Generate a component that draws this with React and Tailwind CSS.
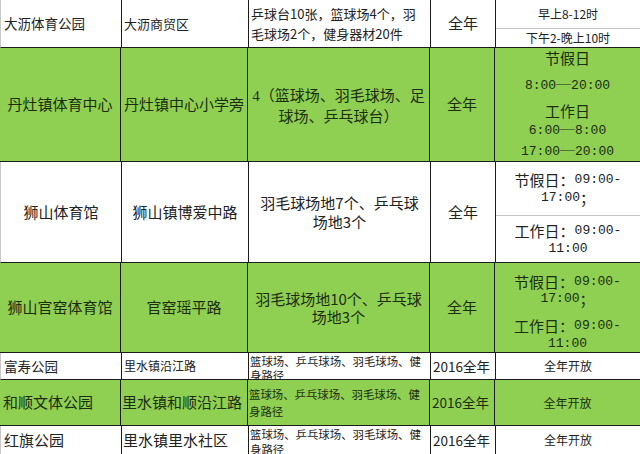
import React from "react"

const sans = "font-['Noto_Sans_CJK_SC',sans-serif]"
const mono = "font-['Liberation_Mono','Noto_Sans_CJK_SC',monospace] text-[13px] leading-none"

function Row({ h, green, children }) {
  return (
    <div
      className={`grid grid-cols-[121px_127px_182px_65px_1fr] border-b border-[#1c1c1c] ${h} ${
        green ? "bg-[#8fcf52] text-[#1b2e12]" : "bg-white text-[#222] border-l border-l-[#c8c8c8]"
      }`}
    >
      {children}
    </div>
  )
}

function Cell({ className = "", children, last }) {
  return (
    <div className={`flex items-center overflow-hidden ${last ? "" : "border-r border-[#1c1c1c]"} ${className}`}>
      {children}
    </div>
  )
}

function Line({ h = "h-[18px]", className = "", children }) {
  return <div className={`${h} flex items-center whitespace-nowrap ${className}`}>{children}</div>
}

function Time({ label, a, b, semi }) {
  return (
    <>
      <Line>
        <span className="text-[15px] leading-none">{label}</span>
        <span className={mono}>{a}</span>
      </Line>
      <Line>
        <span className={mono}>{b}</span>
        {semi && <span className="text-[15px] leading-none">；</span>}
      </Line>
    </>
  )
}

function Dash({ from, to, className = "" }) {
  return (
    <Line h="h-[20px]" className={className}>
      <span className={mono}>{from}</span>
      <span className="font-['Liberation_Serif',serif] text-[15px] leading-[15px] relative -top-[2px]">—</span>
      <span className={mono}>{to}</span>
    </Line>
  )
}

export default function App() {
  return (
    <div className={`w-[640px] h-[454px] overflow-hidden bg-white ${sans}`}>
      {/* 大沥 */}
      <Row h="h-[48px]">
        <Cell className="px-[3px] text-[13.5px]">大沥体育公园</Cell>
        <Cell className="px-[2px] text-[13px]">大沥商贸区</Cell>
        <Cell className="px-[2px] text-[13px] leading-[20px]">
          <div>
            乒球台10张，篮球场4个，羽
            <br />
            毛球场2个，健身器材20件
          </div>
        </Cell>
        <Cell className="justify-center text-[15px]">全年</Cell>
        <Cell last className="flex-col items-stretch text-[12px]">
          <div className="h-[29px] flex items-center justify-center border-b border-[#c4c4c4]">早上8-12时</div>
          <div className="flex-1 flex items-center justify-center">下午2-晚上10时</div>
        </Cell>
      </Row>

      {/* 丹灶 */}
      <Row h="h-[114px]" green>
        <Cell className="justify-center text-[15px]">丹灶镇体育中心</Cell>
        <Cell className="justify-center text-[15px] whitespace-nowrap">丹灶镇中心小学旁</Cell>
        <Cell className="justify-center text-center text-[15px] leading-[19px]">
          <div>
            <span className="font-['Liberation_Serif',serif]">4</span>（篮球场、羽毛球场、足
            <br />
            球场、乒乓球台）
          </div>
        </Cell>
        <Cell className="justify-center text-[15px]">全年</Cell>
        <Cell last className="flex-col items-center justify-start">
          <Line h="h-[20px]" className="text-[15px]">节假日</Line>
          <Dash from="8:00" to="20:00" className="mt-[8px]" />
          <Line h="h-[20px]" className="mt-[6px] text-[15px]">工作日</Line>
          <Dash from="6:00" to="8:00" className="h-[19px]" />
          <Dash from="17:00" to="20:00" className="mt-[1px]" />
        </Cell>
      </Row>

      {/* 狮山体育馆 */}
      <Row h="h-[101px]">
        <Cell className="justify-center text-[15px]">狮山体育馆</Cell>
        <Cell className="justify-center text-[15px]">狮山镇博爱中路</Cell>
        <Cell className="justify-center text-center text-[15px] leading-[19px]">
          <div>
            羽毛球场地7个、乒乓球
            <br />
            场地3个
          </div>
        </Cell>
        <Cell className="justify-center text-[15px]">全年</Cell>
        <Cell last className="flex-col items-stretch">
          <div className="h-[54px] flex flex-col items-center justify-center border-b border-[#c4c4c4]">
            <Time label="节假日：" a="09:00-" b="17:00" semi />
          </div>
          <div className="flex-1 flex flex-col items-center justify-center">
            <Time label="工作日：" a="09:00-" b="11:00" />
          </div>
        </Cell>
      </Row>

      {/* 狮山官窑 */}
      <Row h="h-[90px]" green>
        <Cell className="justify-center text-[15px]">狮山官窑体育馆</Cell>
        <Cell className="justify-center text-[15px]">官窑瑶平路</Cell>
        <Cell className="justify-center text-center text-[15px] leading-[18px]">
          <div>
            羽毛球场地10个、乒乓球
            <br />
            场地3个
          </div>
        </Cell>
        <Cell className="justify-center text-[15px]">全年</Cell>
        <Cell last className="flex-col items-center justify-start pt-[10px]">
          <Time label="节假日：" a="09:00-" b="17:00" semi />
          <div className="mt-[9px] flex flex-col items-center">
            <Time label="工作日：" a="09:00-" b="11:00" />
          </div>
        </Cell>
      </Row>

      {/* 富寿 */}
      <Row h="h-[27px]">
        <Cell className="px-[3px] text-[13.5px]">富寿公园</Cell>
        <Cell className="px-[2px] text-[12px]">里水镇沿江路</Cell>
        <Cell className="items-start px-[1px] pt-[1px] text-[11.4px] leading-[14px]">
          <div>篮球场、乒乓球场、羽毛球场、健身路径</div>
        </Cell>
        <Cell className="px-[2px] text-[13.5px]">2016全年</Cell>
        <Cell last className="justify-center text-[12px]">全年开放</Cell>
      </Row>

      {/* 和顺 */}
      <Row h="h-[46px]" green>
        <Cell className="px-[3px] text-[15px]">和顺文体公园</Cell>
        <Cell className="px-[1px] text-[15px] whitespace-nowrap">里水镇和顺沿江路</Cell>
        <Cell className="items-start px-[1px] pt-[6px] text-[11.4px] leading-[17px]">
          <div>篮球场、乒乓球场、羽毛球场、健身路径</div>
        </Cell>
        <Cell className="px-[2px] text-[13.5px]">2016全年</Cell>
        <Cell last className="justify-center text-[12px]">全年开放</Cell>
      </Row>

      {/* 红旗 */}
      <Row h="h-[29px]">
        <Cell className="px-[3px] text-[15px]">红旗公园</Cell>
        <Cell className="px-[1px] text-[15px]">里水镇里水社区</Cell>
        <Cell className="items-start px-[1px] pt-[1px] text-[11.4px] leading-[15px]">
          <div>篮球场、乒乓球场、羽毛球场、健身路径</div>
        </Cell>
        <Cell className="px-[2px] text-[13.5px]">2016全年</Cell>
        <Cell last className="justify-center text-[12px]">全年开放</Cell>
      </Row>
    </div>
  )
}
